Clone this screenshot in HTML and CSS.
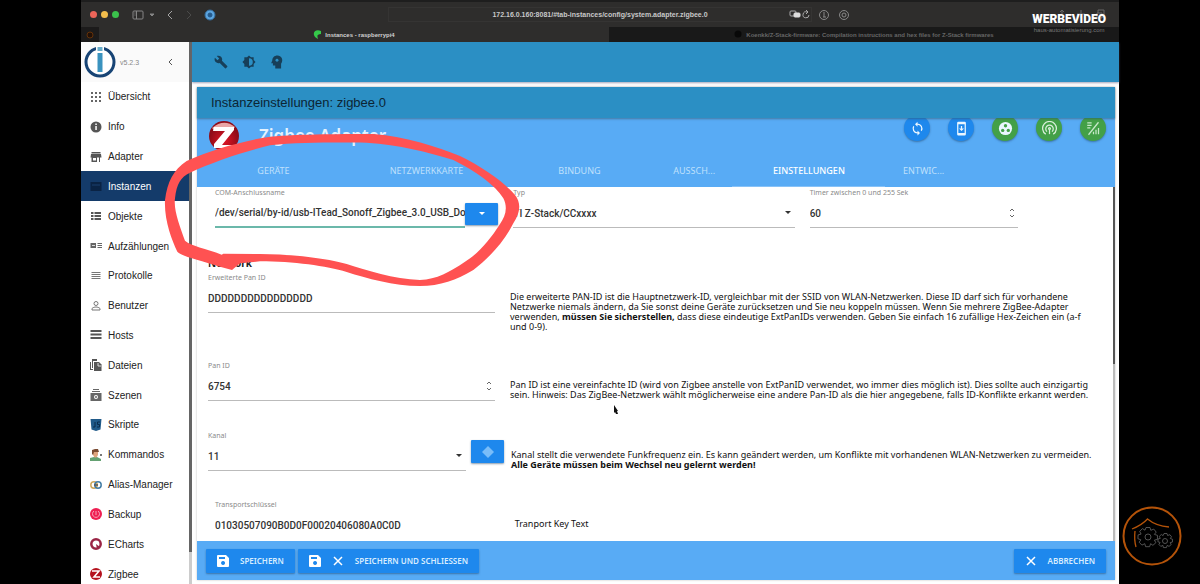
FILE: index.html
```html
<!DOCTYPE html>
<html lang="de">
<head>
<meta charset="utf-8">
<title>Instances - raspberrypi4</title>
<link rel="stylesheet" href="styles.css">
</head>
<body>
<div class="stage">
  <header class="browser">
    <div class="toolbar">
      <span class="lights"><i class="red"></i><i class="yellow"></i><i class="green"></i></span>
      <svg class="nav-icons" width="96" height="16" viewBox="0 0 96 16" fill="none" stroke="#858585">
        <rect x="1" y="4" width="10" height="8" rx="1"/><path d="M4.500 4v8M2.500 6h1M2.500 8h1"/><path d="M18 7l2 2 2-2z" fill="#858585"/>
        <path d="M40 4l-4 4 4 4" stroke="#a5a5a5"/><path d="M55 4l4 4-4 4" stroke="#4b4b4a"/>
        <circle cx="78" cy="8" r="5" fill="#5ba4df" stroke="#346b9b"/><circle cx="78" cy="8" r="2" fill="#24598b" stroke="#24598b"/>
      </svg>
      <div class="address">172.16.0.160:8081/#tab-instances/config/system.adapter.zigbee.0
        <svg class="address-icons" width="22" height="10" viewBox="0 0 22 10" fill="none" stroke="#aaa"><rect x="1" y="1" width="6" height="5" rx="1"/><rect x="5" y="3" width="6" height="4" rx="1" fill="#ddd" stroke="#ddd"/><path d="M18 2a3 3 0 1 0 2 3M17 0l2 2-2 2"/></svg>
      </div>
      <svg class="right-icons" width="34" height="14" viewBox="0 0 34 14" fill="none" stroke="#888"><circle cx="7" cy="7" r="4.500"/><path d="M7 4v5M6 9h3"/><circle cx="27" cy="7" r="4.500"/><circle cx="27" cy="7" r="2"/></svg>
      <svg class="share-icons" width="48" height="12" viewBox="0 0 48 12" fill="none" stroke="#666"><path d="M3 5V1M1 3l2-2 2 2M22 1v8M18 5h8M39 4V1h6v7h-3M38 4h5v5h-5z"/></svg>
    </div>
    <div class="tabs">
      <span class="pinned"><svg width="8" height="8" viewBox="0 0 8 8"><circle cx="4" cy="4" r="3" fill="#221006" stroke="#633109"/></svg></span>
      <span class="tab"><svg width="9" height="9" viewBox="0 0 9 9"><path d="M8 1C3-1 0 2 1 5c1 3 3 3 4 4C4 6 4 4 8 4z" fill="#35c94a"/></svg>Instances - raspberrypi4</span>
      <span class="tab inactive"><svg width="9" height="9" viewBox="0 0 9 9"><circle cx="4" cy="4" r="3.500" fill="#080808"/></svg>Koenkk/Z-Stack-firmware: Compilation instructions and hex files for Z-Stack firmwares</span>
    </div>
    <div class="watermark"><strong>WERBEVIDEO</strong><span>haus-automatisierung.com</span></div>
  </header>

  <div class="app">
    <aside class="sidebar">
      <div class="brand">
        <svg width="32" height="32" viewBox="0 0 32 32"><circle cx="16" cy="16" r="14" fill="#fff" stroke="#174475" stroke-width="3"/><path d="M12 0h8v8h-8z" fill="#fff"/><path d="M13.500 7h5v19h-5z" fill="#3a93bf"/><path d="M13.500 1h5v4h-5z" fill="#68aecb"/></svg>
        <span>v5.2.3</span>
        <button class="collapse" aria-label="Menü einklappen"><svg width="6" height="8" viewBox="0 0 6 8" fill="none" stroke="#555"><path d="M5 1L2 4l3 3"/></svg></button>
      </div>
      <nav class="menu">
        <a href="#"><svg viewBox="0 0 12 12" fill="#666"><path d="M1 1h2v2H1zM5 1h2v2H5zM9 1h2v2H9zM1 5h2v2H1zM5 5h2v2H5zM9 5h2v2H9zM1 9h2v2H1zM5 9h2v2H5zM9 9h2v2H9z"/></svg>Übersicht</a>
        <a href="#"><svg viewBox="0 0 12 12"><circle cx="6" cy="6" r="5.500" fill="#555"/><path d="M5.300 5h1.500v4H5.300zM5.300 2.500h1.500V4H5.300z" fill="#fff"/></svg>Info</a>
        <a href="#"><svg viewBox="0 0 12 12" fill="#555"><path d="M1.500 1h9v1.500h-9zM1 3h10l.5 3.500H10V11H9V6.500H7V11H1.500V6.500H.5zM3 7v2.500h3V7z" fill-rule="evenodd"/></svg>Adapter</a>
        <a href="#" class="active" aria-current="page"><svg viewBox="0 0 12 12" fill="#0a2344"><path d="M.5 2h11v9H.5z"/><path d="M2 5h8" stroke="#1b416f"/></svg>Instanzen</a>
        <a href="#"><svg viewBox="0 0 12 12" fill="#555"><path d="M1 2h2.500v2H1zM4.500 2H11v2H4.500zM1 5h2.500v2H1zM4.500 5H11v2H4.500zM1 8h2.500v2H1zM4.500 8H11v2H4.500z"/></svg>Objekte</a>
        <a href="#"><svg viewBox="0 0 12 12" fill="#666"><path d="M.5 3H6v5H.5zM7.500 3H12v1H7.500zM7.500 5H12v1H7.500zM7.500 7H12v1H7.500z"/><path d="M2 5h3v1H2z" fill="#ddd"/></svg>Aufzählungen</a>
        <a href="#"><svg viewBox="0 0 12 12" stroke="#777"><path d="M1.500 2.500h9M1.500 4.500h9M1.500 6.500h9M1.500 8.500h9"/></svg>Protokolle</a>
        <a href="#"><svg viewBox="0 0 12 12" fill="none" stroke="#777"><circle cx="6" cy="3.500" r="2"/><path d="M2 10V8.500C4 6.500 8 6.500 10 8.500V10z"/></svg>Benutzer</a>
        <a href="#"><svg viewBox="0 0 12 12" stroke="#555" stroke-width="2"><path d="M.5 2h11M.5 5.500h11M.5 9h11"/></svg>Hosts</a>
        <a href="#"><svg viewBox="0 0 12 12" fill="#555"><path d="M1 3v7h2v1H0V3zM2 0h5v2H3v7H2z"/><path d="M4 3h5l2.500 2.500V12H4z"/><path d="M8 4v3h3" fill="none" stroke="#ddd"/></svg>Dateien</a>
        <a href="#"><svg viewBox="0 0 12 12" fill="#666"><path d="M3 0h6v1H3zM2 2h8v1H2zM.5 4h11v8H.5z"/><circle cx="6" cy="8" r="2" fill="#fff"/><circle cx="6" cy="8" r="1"/></svg>Szenen</a>
        <a href="#"><svg viewBox="0 0 12 12"><path d="M.5 0h11l-1 10.500L6 12l-4.500-1.500z" fill="#205a89"/><path d="M5 3v5H3M10 3H7.500v2.500h2V8H7" fill="none" stroke="#0b2d4d"/></svg>Skripte</a>
        <a href="#"><svg viewBox="0 0 12 12"><path d="M0 12V9l4-1h3l4 2v2z" fill="#64a172"/><path d="M3 3h5v3L6.500 8.500h-2L3 6z" fill="#dfa57e"/><path d="M2 5V1l3-1h3l1 3-5 0-1 3z" fill="#7a4b32"/><path d="M10 5h2v2h-2z" fill="#777"/></svg>Kommandos</a>
        <a href="#"><svg viewBox="0 0 12 12" fill="none" stroke-width="1.500"><circle cx="4" cy="6" r="3.200" stroke="#d0a95c"/><circle cx="8" cy="6" r="3.200" stroke="#437da5"/><path d="M4 6h4" stroke="#555"/></svg>Alias-Manager</a>
        <a href="#"><svg viewBox="0 0 12 12"><circle cx="6" cy="6" r="6" fill="#ef1f52"/><path d="M4 3a3.500 3.500 0 1 0 4 0M6 3v4" fill="none" stroke="#f6a1b8"/></svg>Backup</a>
        <a href="#"><svg viewBox="0 0 12 12"><circle cx="6" cy="6" r="4.700" fill="#fff" stroke="#9a2445" stroke-width="2.500"/><path d="M6 6l4 3-3 2z" fill="#9a2445"/></svg>ECharts</a>
        <a href="#"><svg viewBox="0 0 12 12"><circle cx="6" cy="6" r="6" fill="#b5121e"/><path d="M2 3h7L4 9h6" fill="none" stroke="#fff" stroke-width="1.600"/></svg>Zigbee</a>
      </nav>
    </aside>

    <main class="main">
      <div class="appbar">
        <button aria-label="Systemeinstellungen"><svg viewBox="0 0 24 24"><path d="M22.700 19l-9.100-9.100c.9-2.300.4-5-1.500-6.900-2-2-5-2.400-7.400-1.300L9 6 6 9 1.600 4.700C.4 7.100.9 10.100 2.900 12.100c1.900 1.900 4.600 2.400 6.900 1.500l9.100 9.100c.4.400 1 .4 1.400 0l2.300-2.300c.5-.4.500-1.100.1-1.400z"/></svg></button>
        <button aria-label="Farbschema"><svg viewBox="0 0 24 24"><path d="M20 15.300L23.300 12 20 8.700V4h-4.700L12 .7 8.700 4H4v4.700L.7 12 4 15.300V20h4.700l3.300 3.300 3.300-3.300H20z"/><path d="M12 5.500a6.500 6.500 0 0 1 0 13z" fill="#2b8fc4"/></svg></button>
        <button aria-label="Expertenmodus"><svg viewBox="0 0 24 24"><path d="M13 1C7 1 4 5 4 9l-2 5h3v4h4v5h10V15c5-7 0-14-6-14z"/><circle cx="12" cy="9" r="2.500" fill="#2b8fc4"/></svg></button>
      </div>

      <section class="dialog">
        <h1>Instanzeinstellungen: zigbee.0</h1>
        <div class="hero">
          <div class="hero-top">
            <svg class="logo" width="30" height="30" viewBox="0 0 30 30"><defs><radialGradient id="ball" cx="50%" cy="65%"><stop offset="0" stop-color="#e21525"/><stop offset="1" stop-color="#8e0c19"/></radialGradient></defs><circle cx="15" cy="15" r="15" fill="url(#ball)"/><path d="M3 7Q15-3 26 6l-3 3H5z" fill="#e9a5a5"/><path d="M5 6h20v3L13 24h14l-2 3H5v-4L16 10H4z" fill="#fff"/></svg>
            <h2>Zigbee Adapter</h2>
            <div class="actions">
              <button aria-label="Aktualisieren"><svg viewBox="0 0 24 24"><path d="M12 4V1L8 5l4 4V6a6 6 0 0 1 5.200 8.800l1.500 1.500A8 8 0 0 0 12 4zm0 14a6 6 0 0 1-5.200-8.800L5.300 7.700A8 8 0 0 0 12 20v3l4-4-4-4z"/></svg></button>
              <button aria-label="Firmware"><svg viewBox="0 0 24 24"><path fill-rule="evenodd" d="M7 1h10q2 0 2 2v18q0 2-2 2H7q-2 0-2-2V3q0-2 2-2zm0 4v14h10V5zm4 3h2v4h3l-4 4-4-4h3z"/></svg></button>
              <button class="go" aria-label="Gruppen"><svg viewBox="0 0 24 24"><circle cx="12" cy="12" r="10.500"/><g fill="#43a047"><circle cx="12" cy="7.500" r="2.700"/><circle cx="7.500" cy="15" r="2.700"/><circle cx="16.500" cy="15" r="2.700"/></g></svg></button>
              <button class="go" aria-label="Anlernen"><svg viewBox="0 0 24 24"><g fill="none" stroke="#d9f0da" stroke-width="2"><path d="M6 21a11 11 0 1 1 12 0M8 17a6 6 0 1 1 8 0"/><circle cx="12" cy="12" r="1.500"/><path d="M12 14v7"/></g></svg></button>
              <button class="go" aria-label="Verbindungen"><svg viewBox="0 0 24 24"><g fill="none" stroke="#c7e8c9" stroke-width="2"><path d="M20 2L4 22M2 3h7M2 7h7M2 11h5M12 21v-4M16 21v-7M20 21V11"/></g></svg></button>
            </div>
          </div>
          <nav class="sections">
            <a href="#" class="wide">GERÄTE</a><a href="#" class="wide">NETZWERKKARTE</a><a href="#" class="wide">BINDUNG</a><a href="#">AUSSCH...</a><a href="#" class="wide selected">EINSTELLUNGEN</a><a href="#">ENTWIC...</a>
          </nav>
        </div>

        <form class="settings" id="settings">
          <div class="row connection">
            <div class="field port"><label for="port">COM-Anschlussname</label><div class="with-button"><input class="focused" id="port" value="/dev/serial/by-id/usb-ITead_Sonoff_Zigbee_3.0_USB_Dongle"><button type="button" class="blue" aria-label="Port wählen"><svg width="6" height="4" viewBox="0 0 6 4"><path d="M0 0h6L3 3z" fill="#fff"/></svg></button></div></div>
            <div class="field"><label for="typ">Typ</label><select id="typ"><option>TI Z-Stack/CCxxxx</option></select></div>
            <div class="field"><label for="timer">Timer zwischen 0 und 255 Sek</label><input class="number" id="timer" value="60"></div>
          </div>
          <h3>Network</h3>
          <div class="row pair ext">
            <div class="field"><label for="ext">Erweiterte Pan ID</label><input id="ext" value="DDDDDDDDDDDDDDDD"></div>
            <p>Die erweiterte PAN-ID ist die Hauptnetzwerk-ID, vergleichbar mit der SSID von WLAN-Netzwerken. Diese ID darf sich für vorhandene<br>Netzwerke niemals ändern, da Sie sonst deine Geräte zurücksetzen und Sie neu koppeln müssen. Wenn Sie mehrere ZigBee-Adapter<br>verwenden, <b>müssen Sie sicherstellen,</b> dass diese eindeutige ExtPanIDs verwenden. Geben Sie einfach 16 zufällige Hex-Zeichen ein (a-f<br>und 0-9).</p>
          </div>
          <div class="row pair pan">
            <div class="field"><label for="pan">Pan ID</label><input class="number" id="pan" value="6754"></div>
            <p>Pan ID ist eine vereinfachte ID (wird von Zigbee anstelle von ExtPanID verwendet, wo immer dies möglich ist). Dies sollte auch einzigartig<br>sein. Hinweis: Das ZigBee-Netzwerk wählt möglicherweise eine andere Pan-ID als die hier angegebene, falls ID-Konflikte erkannt werden.</p>
          </div>
          <div class="row channel">
            <div class="field"><label for="kanal">Kanal</label><select id="kanal"><option>11</option></select></div>
            <button type="button" class="blue" aria-label="Kanal scannen"><svg width="14" height="14" viewBox="0 0 14 14" fill="#79bdf9"><path d="M7 1l3 3 3 3-3 3-3 3-3-3-3-3 3-3z"/></svg></button>
            <p>Kanal stellt die verwendete Funkfrequenz ein. Es kann geändert werden, um Konflikte mit vorhandenen WLAN-Netzwerken zu vermeiden.<br><b>Alle Geräte müssen beim Wechsel neu gelernt werden!</b></p>
          </div>
          <div class="row pair transport">
            <div class="field"><label for="key">Transportschlüssel</label><input id="key" value="01030507090B0D0F00020406080A0C0D"></div>
            <p>Tranport Key Text</p>
          </div>
        </form>

        <footer class="footer">
          <button class="blue"><svg viewBox="0 0 12 12"><path fill-rule="evenodd" d="M1 0h8l3 3v8q0 1-1 1H1q-1 0-1-1V1q0-1 1-1zm1 2v2h6V2zm4 4a2 2 0 1 0 .1 0z"/></svg>SPEICHERN</button>
          <button class="blue"><svg viewBox="0 0 12 12"><path fill-rule="evenodd" d="M1 0h8l3 3v8q0 1-1 1H1q-1 0-1-1V1q0-1 1-1zm1 2v2h6V2zm4 4a2 2 0 1 0 .1 0z"/></svg><svg viewBox="0 0 12 12" stroke="#fff" stroke-width="1.500"><path d="M2 2l8 8M10 2l-8 8"/></svg>SPEICHERN UND SCHLIESSEN</button>
          <button class="blue cancel"><svg viewBox="0 0 12 12" stroke="#fff" stroke-width="1.500"><path d="M2 2l8 8M10 2l-8 8"/></svg>ABBRECHEN</button>
        </footer>
      </section>
    </main>
  </div>

  <svg class="marker" width="380" height="180" viewBox="0 0 1140 540" aria-hidden="true"><path fill="#ff5252" fill-rule="evenodd" d="M180 440C120 420 70 412 52 395C35 360 12 300 15 240C22 185 40 150 80 123C150 90 250 62 330 50C420 42 560 42 640 42C740 50 830 80 900 108C970 142 1030 185 1065 225C1085 250 1080 280 1060 310C1030 370 980 420 940 450C890 480 840 498 780 498C700 498 620 475 560 456C500 438 400 424 300 424L240 430L216 450ZM185 404C140 385 90 378 75 362C60 320 40 270 45 235C50 190 62 172 90 158C160 125 250 95 330 76C420 66 540 68 620 68C720 75 800 95 880 120C950 155 1005 195 1030 235C1045 265 1035 290 1020 312C990 360 950 405 915 425C870 455 830 478 780 480C700 478 620 450 560 432C500 415 400 403 300 402L190 401Z"/></svg>
  <svg class="cursor" width="6" height="10" viewBox="0 0 6 10" aria-hidden="true"><path d="M1 0l4 6H4l1 3-2 0-1-2-1 1z" fill="#111"/></svg>
</div>

<svg class="channel-logo" width="60" height="60" viewBox="0 0 60 60" fill="none" role="img" aria-label="haus-automatisierung">
  <circle cx="30" cy="30" r="28.500" stroke="#b45309" stroke-width="2"/>
  <path d="M10 23Q20 19 25.500 13Q34 20 47 21M13 25Q12 34 14 41" stroke="#b45309" stroke-width="1.300"/>
  <g stroke="#666" stroke-width=".8"><path d="M24 21.500l4 0 .8 2.800 3-1.200 2.400 3-1.800 2.300 3.100 1-.1 4-3 .7 1.500 2.600-3 2.600-2.300-1.600-1 3-4 0-.8-3-2.900 1.400-2.700-2.900 1.700-2.400-3-1.100.2-3.800 3-.8-1.400-2.700 2.700-2.800 2.600 1.600z"/><circle cx="26" cy="31" r="3"/><path d="M42 27.500h3l.6 2 2.300-.8 1.600 2-1.200 1.800 2.300.8-.2 2.800-2.200.5 1 2-2.200 1.800-1.800-1-.8 2.200h-3l-.5-2.200-2.100 1-1.900-2 1.200-1.900-2.200-.8.200-2.800 2.200-.5-1-2 2-1.900 1.800 1.100z"/><circle cx="43" cy="35" r="2.500"/></g>
</svg>
</body>
</html>
```

FILE: styles.css
```css
* { box-sizing: border-box; }
body { margin: 0; height: 100vh; overflow: hidden; background: #000; padding: 0 81px; font-family: "Liberation Sans", Arial, sans-serif; font-size: 10px; }
button, input, select { font: inherit; color: inherit; border: 0; padding: 0; margin: 0; background: none; border-radius: 0; outline: 0; }
h1, h2, h3, p { margin: 0; }
a { color: inherit; text-decoration: none; }
svg { display: block; flex: none; }
.stage { position: relative; height: 100%; display: flex; flex-direction: column; background: #fff; }

.browser { position: relative; flex: none; height: 42px; background: #2e2d2c; display: flex; flex-direction: column; }
.toolbar { height: 27px; display: flex; align-items: center; padding: 0 12px 0 9px; border-top: 2px solid #1e1e1e; }
.lights { display: flex; gap: 4px; }
.lights i { width: 7px; height: 7px; border-radius: 50%; }
.red { background: #ec6559; }
.yellow { background: #f2bd4c; }
.green { background: #3bc14c; }
.nav-icons { margin-left: 13px; }
.address { position: relative; margin-left: 160px; width: 424px; height: 15px; line-height: 13px; border: 1px solid #353433; font-size: 7px; font-weight: bold; color: #c8c8c8; text-align: center; }
.address-icons { position: absolute; right: 0; top: 2px; }
.right-icons { margin-left: 5px; }
.share-icons { margin-left: auto; }
.tabs { flex: 1; display: flex; font-size: 6px; color: #d0d0d0; font-weight: bold; }
.pinned { width: 18px; background: #1c1b1b; display: flex; align-items: center; padding-left: 5px; }
.tab { flex: 1; display: flex; align-items: center; justify-content: center; gap: 3px; }
.tab.inactive { background: #191919; color: #666; }
.watermark { position: absolute; right: 13px; top: 11px; display: flex; flex-direction: column; align-items: center; color: #fff; font-size: 6px; line-height: 7px; }
.watermark strong { font: 900 12px/16px Roboto, sans-serif; }
.watermark span { color: #777; }

.app { flex: 1; min-height: 0; display: flex; }
.sidebar { flex: none; width: 111px; display: flex; flex-direction: column; border-right: 3px solid #656565; border-image: linear-gradient(#656565 0 94%, #ccc 94%) 1; background: #fff; }
.brand { flex: none; height: 40px; display: flex; align-items: center; padding-left: 3px; gap: 4px; background: #fafafa; font-size: 7px; color: #888; }
.collapse { margin-left: auto; margin-right: 16px; }
.menu { flex: 1; display: grid; grid-template-rows: repeat(17, minmax(0, 1fr)); margin-bottom: -5px; color: #222; }
.menu a { display: flex; align-items: center; padding-left: 9px; gap: 6px; }
.menu svg { width: 12px; height: 12px; }
.menu .active { background: #143b6a; color: #fff; }

.main { flex: 1; min-width: 0; display: flex; flex-direction: column; background: #fff; }
.appbar { flex: none; height: 40px; background: #2b8fc4; display: flex; align-items: center; gap: 14px; padding-left: 22px; box-shadow: 0 1px 2px #6689; }
.appbar svg { width: 14px; height: 14px; fill: #173f59; }
.dialog { flex: 1; min-height: 0; margin: 5px 4px 4px 5px; display: flex; flex-direction: column; background: #fff; box-shadow: 0 0 2px #8888; }
.dialog h1 { position: relative; z-index: 1; flex: none; height: 31px; padding-left: 14px; background: #2b8fc4; font-size: 13px; line-height: 31px; font-weight: normal; color: #0c2534; box-shadow: 0 1px 2px #3569; }
.hero { flex: none; height: 69px; background: #58abf5; color: #fff; display: flex; flex-direction: column; font-family: "Noto Sans", sans-serif; }
.hero-top { height: 35px; display: flex; align-items: center; padding: 0 9px 0 12px; }
.hero h2 { margin-left: 20px; font-size: 17px; font-weight: 600; line-height: 35px; color: #e4f2fe; }
.actions { margin-left: auto; display: flex; gap: 18px; align-self: flex-start; margin-top: -3px; }
.actions button { width: 26px; height: 26px; border-radius: 50%; background: #1e88ed; display: grid; place-items: center; box-shadow: 0 1px 2px #2468; }
.actions .go { background: #43a047; }
.actions svg { width: 15px; height: 15px; fill: #eaf6ff; }
.sections { flex: 1; display: flex; font-size: 9px; line-height: 35px; color: #bfe0fc; }
.sections a { width: calc(100% / 12); height: 34px; text-align: center; }
.sections .wide { width: calc(100% / 6); }
.sections .selected { color: #fff; font-weight: 500; border-bottom: 1px solid #87c2f8; }

.settings { flex: 1; min-height: 0; overflow: hidden; padding-left: 11px; color: #222; border-right: 2px solid #777; border-image: linear-gradient(#555 0 50%, #bbb 50%) 1; }
.row { display: grid; align-items: start; }
.field { min-width: 0; display: flex; flex-direction: column; }
.field label { font: 7px/12px "Noto Sans", sans-serif; color: #8a8a8a; }
.field input, .field select { width: 100%; min-width: 0; height: 29px; border-bottom: 1px solid #bbb; font: 500 10px Roboto, sans-serif; color: #333; }
.field select { appearance: none; background: url("data:image/svg+xml,%3Csvg xmlns='http://www.w3.org/2000/svg' width='14' height='6'%3E%3Cpath d='M4 1h6L7 4z' fill='%23333'/%3E%3C/svg%3E") no-repeat right center; }
.field .number { background: url("data:image/svg+xml,%3Csvg xmlns='http://www.w3.org/2000/svg' width='12' height='10' fill='none' stroke='%23666'%3E%3Cpath d='M4 3l2-2 2 2M4 7l2 2 2-2'/%3E%3C/svg%3E") no-repeat right center; }
.field .focused { border-bottom: 2px solid #6bb8aa; }
.with-button { display: flex; }
.blue { background: #1e88ed; color: #fff; border-radius: 1px; box-shadow: 0 1px 2px #2468; display: flex; align-items: center; justify-content: center; }
.with-button .blue { flex: none; width: 33px; height: 22px; margin-top: 4px; }
.connection { grid-template-columns: 283fr 281fr 208fr 80fr; column-gap: 15px; padding-left: 7px; }
.settings h3 { margin-top: 27px; font: bold 10px/17px "Noto Sans", sans-serif; }
.settings p { font: 9px/10px "Noto Sans", sans-serif; color: #111; white-space: nowrap; }
.pair { grid-template-columns: 287fr 603fr; column-gap: 15px; }
.ext { height: 88px; }
.ext p { margin-top: 20px; }
.pan { height: 70px; }
.pan p { margin-top: 20px; }
.channel { grid-template-columns: 258fr 33px 604fr; column-gap: 5px; height: 69px; }
.channel .blue { height: 23px; margin-top: 10px; }
.channel p { margin-top: 20px; padding-left: 2px; }
.transport { padding-left: 7px; }
.transport input { border-color: transparent; }
.transport p { margin-top: 20px; }

.footer { flex: none; height: 39px; background: #58abf5; display: flex; align-items: center; gap: 3px; padding: 0 9px; }
.footer .blue { height: 24px; padding: 0 11px; gap: 11px; font: 600 8px/12px "Noto Sans", sans-serif; color: #d8edff; }
.footer svg { width: 12px; height: 12px; fill: #fff; }
.footer .cancel { margin-left: auto; }

.marker { position: absolute; left: 79px; top: 120px; pointer-events: none; }
.cursor { position: absolute; left: 532px; top: 405px; }
.channel-logo { position: absolute; right: 18px; top: 506px; }
```
